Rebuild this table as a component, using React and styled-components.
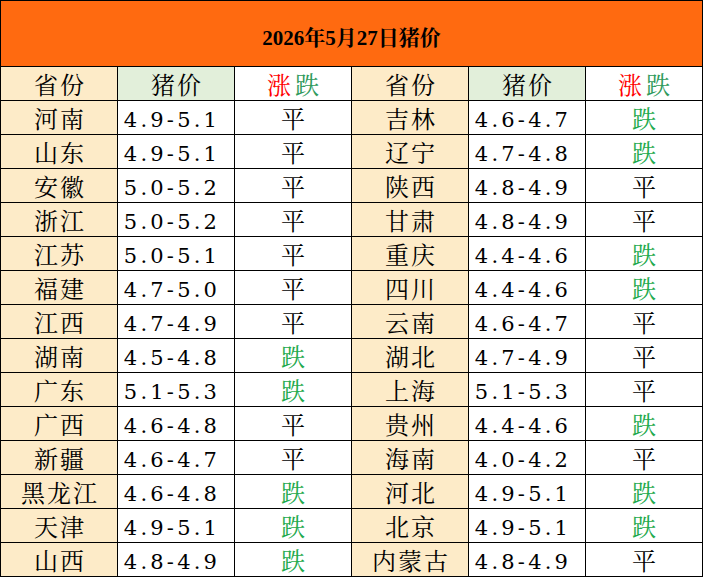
import React from "react";
import styled, { createGlobalStyle } from "styled-components";

const Global = createGlobalStyle`
  html, body { margin: 0; padding: 0; background: #ffffff; }
  body { font-family: "Noto Sans CJK SC", "Liberation Serif", serif; }
`;

const CJK = `"Noto Serif CJK SC", "Noto Sans CJK SC", serif`;

const Sheet = styled.div`
  width: 703px;
  box-sizing: border-box;
  display: grid;
  grid-template-columns: repeat(6, 116px);
  grid-template-rows: 65px;
  grid-auto-rows: 33px;
  gap: 1px;
  padding: 1px;
  background: #000000;
`;

const Title = styled.div`
  grid-column: 1 / -1;
  background: #ff6a10;
  display: flex;
  align-items: center;
  justify-content: center;
  padding-top: 4px;
  box-sizing: border-box;
  font-family: "Liberation Serif", ${CJK};
  font-weight: 700;
  font-size: 21px;
  color: #000;
`;

const Cell = styled.div`
  display: flex;
  align-items: center;
  justify-content: center;
  background: ${(p) => p.$bg || "#ffffff"};
  color: ${(p) => p.$color || "#000000"};
  font-family: ${CJK};
  font-size: 24px;
  letter-spacing: 2px;
  text-indent: 2px;
  line-height: 1;
  overflow: hidden;
  white-space: nowrap;
`;

const Price = styled(Cell)`
  font-family: "DejaVu Serif", "Liberation Serif", serif;
  font-size: 21px;
  letter-spacing: 3.2px;
  text-indent: 0;
  padding-top: 5px;
  padding-right: 8px;
  box-sizing: border-box;
`;

const Mark = styled.span`
  color: ${(p) => p.$color};
`;

const CREAM = "#fdebc8";
const PALE_GREEN = "#e2efda";
const GREEN = "#1faa4d";

const left = [
  ["河南", "4.9-5.1", "平"],
  ["山东", "4.9-5.1", "平"],
  ["安徽", "5.0-5.2", "平"],
  ["浙江", "5.0-5.2", "平"],
  ["江苏", "5.0-5.1", "平"],
  ["福建", "4.7-5.0", "平"],
  ["江西", "4.7-4.9", "平"],
  ["湖南", "4.5-4.8", "跌"],
  ["广东", "5.1-5.3", "跌"],
  ["广西", "4.6-4.8", "平"],
  ["新疆", "4.6-4.7", "平"],
  ["黑龙江", "4.6-4.8", "跌"],
  ["天津", "4.9-5.1", "跌"],
  ["山西", "4.8-4.9", "跌"],
];

const right = [
  ["吉林", "4.6-4.7", "跌"],
  ["辽宁", "4.7-4.8", "跌"],
  ["陕西", "4.8-4.9", "平"],
  ["甘肃", "4.8-4.9", "平"],
  ["重庆", "4.4-4.6", "跌"],
  ["四川", "4.4-4.6", "跌"],
  ["云南", "4.6-4.7", "平"],
  ["湖北", "4.7-4.9", "平"],
  ["上海", "5.1-5.3", "平"],
  ["贵州", "4.4-4.6", "跌"],
  ["海南", "4.0-4.2", "平"],
  ["河北", "4.9-5.1", "跌"],
  ["北京", "4.9-5.1", "跌"],
  ["内蒙古", "4.8-4.9", "平"],
];

const Header = () => (
  <>
    <Cell $bg={CREAM}>省份</Cell>
    <Cell $bg={PALE_GREEN}>猪价</Cell>
    <Cell>
      <Mark $color="#ff0000">涨</Mark>
      <Mark $color="#2f9a5c">跌</Mark>
    </Cell>
  </>
);

const Group = ({ row }) => (
  <>
    <Cell $bg={CREAM}>{row[0]}</Cell>
    <Price>{row[1]}</Price>
    <Cell $color={row[2] === "跌" ? GREEN : "#000000"}>{row[2]}</Cell>
  </>
);

export default function App() {
  return (
    <>
      <Global />
      <Sheet>
        <Title>2026年5月27日猪价</Title>
        <Header />
        <Header />
        {left.map((row, i) => (
          <React.Fragment key={i}>
            <Group row={row} />
            <Group row={right[i]} />
          </React.Fragment>
        ))}
      </Sheet>
    </>
  );
}
